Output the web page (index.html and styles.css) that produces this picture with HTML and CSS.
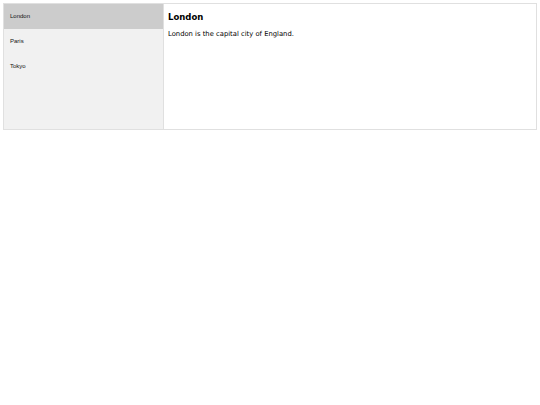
FILE: index.html
```html
<!DOCTYPE html>
<html>
<head>
<meta charset="utf-8">
<link rel="stylesheet" href="styles.css">
</head>
<body>
<div class="wrap">
  <div class="tab">
    <button class="tablink active">London</button>
    <button class="tablink">Paris</button>
    <button class="tablink">Tokyo</button>
  </div>
  <div class="tabcontent">
    <h3 class="title">London</h3>
    <p class="text">London is the capital city of England.</p>
  </div>
</div>
</body>
</html>
```
FILE: styles.css
```css
html, body {
  margin: 0;
  padding: 0;
  background: #fff;
}
body {
  padding: 3px;
  font-family: Verdana, "DejaVu Sans", sans-serif;
}
.wrap {
  display: flex;
  width: 534px;
  height: 127px;
  box-sizing: border-box;
}
.tab {
  width: 161px;
  height: 127px;
  box-sizing: border-box;
  border: 1px solid #e0e0e0;
  background: #f1f1f1;
  display: flex;
  flex-direction: column;
}
.tablink {
  display: block;
  height: 25px;
  width: 100%;
  margin: 0;
  padding: 0 0 1px 6px;
  border: none;
  outline: none;
  background: inherit;
  text-align: left;
  font-family: "Liberation Sans", Arial, sans-serif;
  font-size: 6px;
  color: #111;
}
.tablink.active {
  background: #ccc;
}
.tabcontent {
  flex: 1;
  height: 127px;
  box-sizing: border-box;
  border: 1px solid #e0e0e0;
  border-left: none;
  padding: 0 4px;
}
.title {
  margin: 7px 0 0 0;
  font-family: "DejaVu Sans", Verdana, sans-serif;
  font-size: 8.5px;
  font-weight: bold;
  line-height: 12px;
  color: #000;
}
.text {
  margin: 6px 0 0 0;
  font-family: "DejaVu Sans", Verdana, sans-serif;
  font-size: 6.8px;
  line-height: 10px;
  color: #000;
}
```
